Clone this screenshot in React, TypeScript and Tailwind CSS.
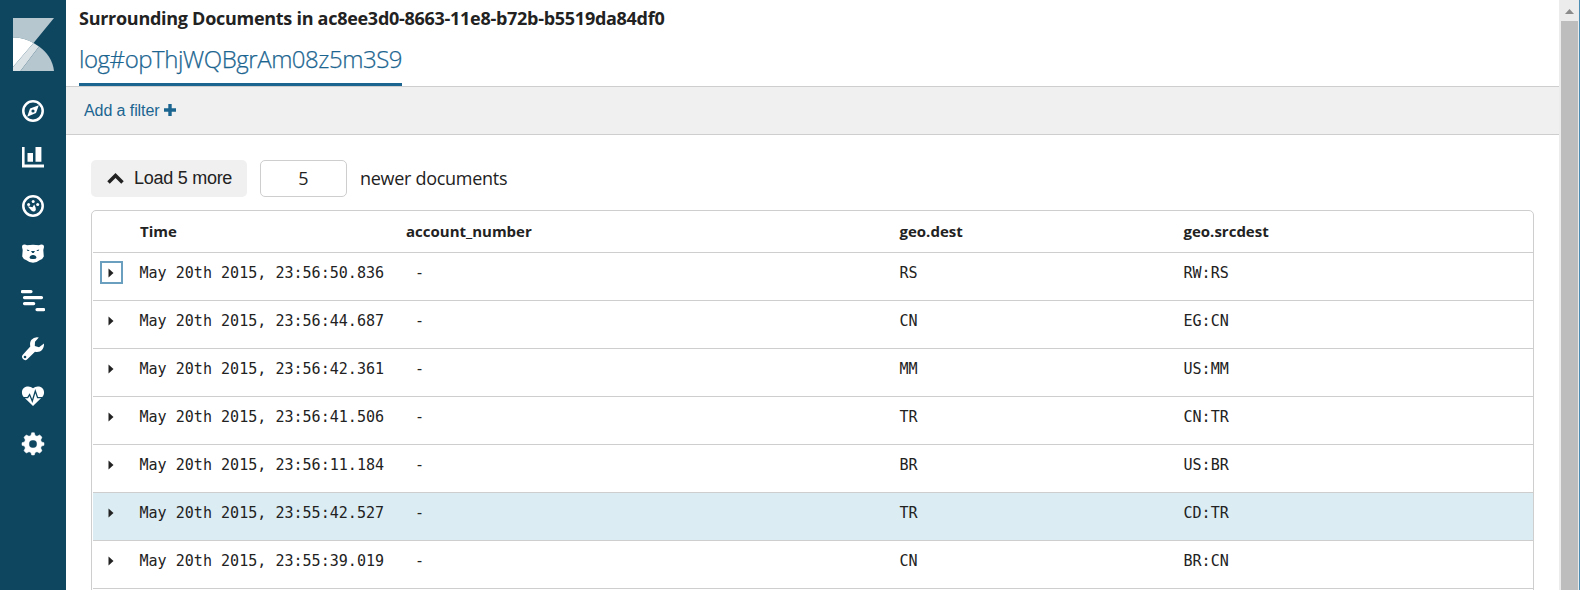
import React from "react";

const rows = [
  ["May 20th 2015, 23:56:50.836", "RS", "RW:RS"],
  ["May 20th 2015, 23:56:44.687", "CN", "EG:CN"],
  ["May 20th 2015, 23:56:42.361", "MM", "US:MM"],
  ["May 20th 2015, 23:56:41.506", "TR", "CN:TR"],
  ["May 20th 2015, 23:56:11.184", "BR", "US:BR"],
  ["May 20th 2015, 23:55:42.527", "TR", "CD:TR"],
  ["May 20th 2015, 23:55:39.019", "CN", "BR:CN"],
];

function Logo() {
  return (
    <svg width="41" height="53" viewBox="0 0 41 53" className="ml-[13px] mt-[18px] block">
      <path d="M0 0H41L20.500 25C15 21.500 8 19.500 0 19.500Z" fill="#b6c7cf" />
      <path d="M0 19.500C8 19.500 15 21.500 20.500 25L0 49Z" fill="#fff" />
      <path d="M20.500 25L26 28.500L7.500 53H0V49Z" fill="#dbe3e7" />
      <path d="M26 28.500C34 34 40 43 41 53H7.500Z" fill="#b6c7cf" />
    </svg>
  );
}

const bg = "#0e455f";

const icons: React.ReactNode[] = [
  <g key="discover">
    <circle cx="12" cy="12" r="9.7" fill="none" stroke="#fff" strokeWidth="2.500" />
    <path fillRule="evenodd" d="M17.800 6.200L15 14L6.200 17.800L9 9.600ZM12 10.400A1.600 1.600 0 1 0 12 13.600A1.600 1.600 0 1 0 12 10.400Z" fill="#fff" />
  </g>,
  <path key="visualize" d="M1 1H3.600V18.500H23V21.500H1ZM6.500 7H12V15.700H6.500ZM14.500 1H20.400V15.700H14.500Z" fill="#fff" />,
  <g key="dashboard" fill="#fff">
    <circle cx="12" cy="12" r="9.700" fill="none" stroke="#fff" strokeWidth="2.500" />
    <circle cx="7.600" cy="10.400" r="1.500" />
    <circle cx="12.200" cy="7.600" r="1.500" />
    <circle cx="16.700" cy="10.400" r="1.500" />
    <path d="M6.600 12.200L11.500 13.200L13.200 10.500L14.600 13.400Q15.300 15.600 14 17Q12.300 18.300 10.600 16.800Z" />
  </g>,
  <g key="timelion">
    <path d="M1 5Q.8 2.600 3.300 2.600Q5 2.600 6 3.200Q12 2.200 18 3.200Q19 2.600 20.700 2.600Q23.200 2.600 23 5L22.300 8L22.800 14.500Q22 17 18.500 18.300Q16 20.700 12 20.700T5.500 18.300Q2 17 1.200 14.500L1.700 8Z" fill="#fff" />
    <path d="M5.800 7.500L8.500 8.200L8 9L6.200 8.700ZM18.200 7.500L15.500 8.200L16 9L17.800 8.700ZM10 9H14L12.700 11H11.300ZM8.500 15.800Q9 13 12 13T15.500 15.800Q15 17.300 12 17Q9 17.300 8.500 15.800Z" fill={bg} />
  </g>,
  <g key="apm" stroke="#fff" strokeWidth="3.200" strokeLinecap="round">
    <path d="M1.200 2.600H10M3.500 8.600H20.500M3.500 14.600H12.700M16 20.600H22.800" />
  </g>,
  <g key="tools">
    <path d="M17.800.5Q13.300-.5 10.500 2.800C8.700 5 9 7.600 9.300 9.600L1.800 17.800A3.200 3.200 0 0 0 6.300 22.300L14 14.700C20 15.800 23.300 11.800 23 6.500L18 10.300L13.800 9L14 4.800Z" fill="#fff" />
    <circle cx="4" cy="20" r="1.300" fill={bg} />
  </g>,
  <g key="monitoring">
    <path d="M12 22L2.500 12.800C-.8 8.500 1.500 3 6 2.500Q9.500 2 12 4.200Q14.500 2 18 2.500C22.500 3 24.800 8.500 21.500 12.800Z" fill="#fff" />
    <path d="M3 13.700H6.700L8.600 10.600L11.300 17L14.300 7L16.600 13.700H21" fill="none" stroke={bg} strokeWidth="1.300" />
  </g>,
  <path key="settings" fillRule="evenodd" d="M9.900 3.500L10.700.7H13.300L14.100 3.500L16 4.300L18.700 2.900L21 5.200L19.700 8L20.500 9.900L23 10.700V13.300L20.500 14.100L19.700 16L21 18.800L18.700 21.100L16 19.700L14.100 20.500L13.300 23H10.700L9.900 20.500L8 19.700L5.300 21.100L3 18.800L4.300 16L3.500 14.100L1 13.300V10.700L3.500 9.900L4.300 8L3 5.200L5.300 2.900L8 4.300ZM12 7.900A4.100 4.100 0 1 0 12 16.100A4.100 4.100 0 1 0 12 7.900Z" fill="#fff" stroke="#fff" strokeWidth=".5" strokeLinejoin="round" />,
];

function Sidebar() {
  return (
    <nav className="w-[66px] shrink-0 bg-[#0e455f]">
      <Logo />
      <ul className="mt-4 flex flex-col">
        {icons.map((icon, i) => (
          <li key={i} className="flex h-[47.6px] items-center justify-center">
            <svg width="24" height="24" viewBox="0 0 24 24">{icon}</svg>
          </li>
        ))}
      </ul>
    </nav>
  );
}

const columns = "grid grid-cols-[46.5px_275.500px_484.500px_284px_1fr]";

function Row({ row, index }: { row: string[]; index: number }) {
  return (
    <div
      className={`${columns} ml-px h-12 border-t border-[#cecece] pt-[9px] font-['DejaVu_Sans_Mono',monospace] text-[15.060px] leading-[23px] ${index === 5 ? "bg-[#dbecf3]" : ""}`}
    >
      <button
        className={`-mt-px ml-[7px] flex size-[23px] items-center justify-center ${index === 0 ? "border-2 border-[#6b9fc0]" : ""}`}
      >
        <svg width="6" height="10" viewBox="0 0 6 10" className="mr-px">
          <path d="M0.500 0.500L5.500 5L0.500 9.500Z" fill="#222" />
        </svg>
      </button>
      <div>{row[0]}</div>
      <div>-</div>
      <div>{row[1]}</div>
      <div>{row[2]}</div>
    </div>
  );
}

export default function App() {
  return (
    <div className="flex h-[590px] w-[1580px] overflow-hidden bg-white font-['Open_Sans',sans-serif] text-[#222]">
      <Sidebar />
      <main className="flex w-[1493px] shrink-0 flex-col">
        <header className="flex h-[87px] shrink-0 flex-col items-start border-b border-[#cecece] pl-[13px]">
          <h1 className="mt-[6px] whitespace-nowrap text-[18px] font-bold leading-[25px] tracking-[-0.280px]">
            Surrounding Documents in ac8ee3d0-8663-11e8-b72b-b5519da84df0
          </h1>
          <a className="mt-[10px] h-[45px] whitespace-nowrap border-b-[3px] border-[#1b6590] text-[24px] font-light leading-[36px] tracking-[-0.460px] text-[#1b6590] [-webkit-text-stroke:0.25px_#1b6590]">
            log#opThjWQBgrAm08z5m3S9
          </a>
        </header>
        <div className="flex h-12 shrink-0 items-center gap-1 border-b border-[#cecece] bg-[#f0f0f0] pl-[18px] font-['Liberation_Sans',sans-serif] text-[16px] text-[#1b6590]">
          <span className="tracking-[-0.080px]">Add a filter</span>
          <svg width="12" height="12" viewBox="0 0 12 12" className="-mt-px">
            <path d="M4.300 0H7.700V4.300H12V7.700H7.700V12H4.300V7.700H0V4.300H4.300Z" fill="#1b6590" />
          </svg>
        </div>
        <section className="flex flex-col pl-[25px] pr-[25px] pt-[25px]">
          <div className="flex h-[37px] items-center">
            <button className="flex h-[37px] w-[156px] items-center gap-[10px] rounded-[5px] bg-[#f0f0f0] pl-4 font-['Liberation_Sans',sans-serif] text-[18px] tracking-[-0.270px]">
              <svg width="17" height="11" viewBox="0 0 17 11">
                <path d="M1.500 9.500L8.500 2.500L15.500 9.500" fill="none" stroke="#222" strokeWidth="3.500" />
              </svg>
              <span>Load 5 more</span>
            </button>
            <div className="ml-[13px] flex h-[37px] w-[87px] items-center justify-center rounded-[5px] border border-[#cecece] text-[18px]">
              5
            </div>
            <span className="ml-[13px] text-[18px] tracking-[-0.290px]">newer documents</span>
          </div>
          <div className="mt-[13px] h-[420px] w-[1443px] overflow-hidden rounded-t-[5px] border border-[#cecece]">
            <div className="grid h-[41px] grid-cols-[48px_266px_493.500px_284px_1fr] items-center text-[15px] font-bold">
              <div />
              <div>Time</div>
              <div>account_number</div>
              <div>geo.dest</div>
              <div>geo.srcdest</div>
            </div>
            {rows.map((row, i) => (
              <Row key={i} row={row} index={i} />
            ))}
            <div className="ml-px border-t border-[#cecece]" />
          </div>
        </section>
      </main>
      <aside className="flex w-[21px] flex-col border-r border-[#4c8db3] bg-[#ececec]">
        <div className="flex h-[21px] shrink-0 justify-center pt-[9px]">
          <svg width="9" height="5" viewBox="0 0 9 5">
            <path d="M4.500 0L9 5H0Z" fill="#8b8b8b" />
          </svg>
        </div>
        <div className="ml-[2px] mr-px flex-1 bg-[#bdbdbd]" />
      </aside>
    </div>
  );
}
